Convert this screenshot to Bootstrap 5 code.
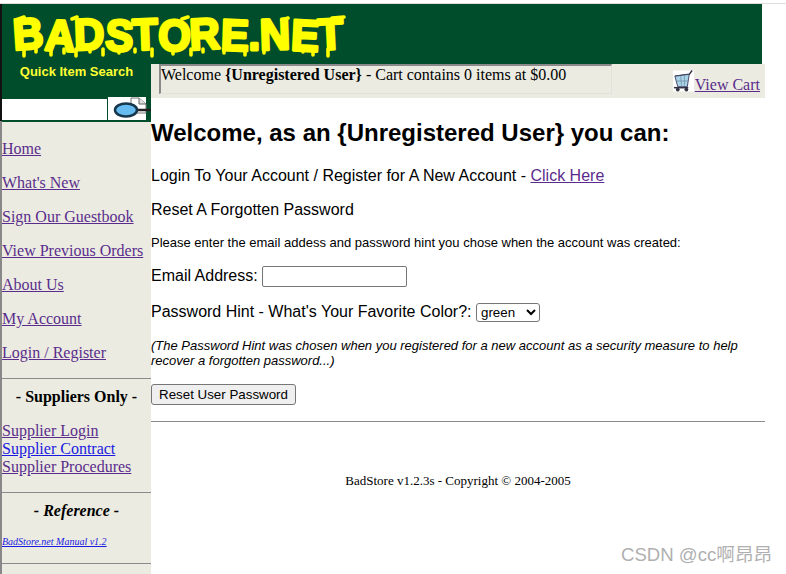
<!DOCTYPE html>
<html lang="en">
<head>
    <meta charset="UTF-8">
    <meta name="viewport" content="width=device-width, initial-scale=1.0">
    <title>BadStore.net - Reset Password</title>
    <link href="https://cdn.jsdelivr.net/npm/bootstrap@5.3.0/dist/css/bootstrap.min.css" rel="stylesheet">
    <style>
        html, body { height: 574px; overflow: hidden; }
        body {
            background: #fff;
            color: #000;
            font-family: "Liberation Serif", serif;
            font-size: 16px;
            line-height: 18px;
        }
        a { color: #5a2d8c; }
        a.fresh { color: #1a1ae0; }
        .top-rule { height: 4px; background: linear-gradient(#fff 3px, #ddd 3px); }
        .shell {
            width: 765px;
            height: 570px;
            border-left: 2px solid #777;
            border-image: linear-gradient(#111 118px, #888 118px) 1;
        }
        .banner { width: 760px; height: 60px; background: #004d2b; }
        .banner svg { display: block; }
        .side-col { width: 149px; flex: none; }
        .search-box { height: 58px; background: #004d2b; }
        .search-title {
            height: 35px;
            color: #ffff33;
            font: bold 13px/15px "Liberation Sans", sans-serif;
            text-align: center;
        }
        .search-input { width: 105px; height: 21px; background: #fff; border: 0; padding: 0; }
        .search-go { width: 38px; height: 23px; background: #fff; border: 0; padding: 0; margin: -2px 0 0 1px; }
        .search-go svg { overflow: visible; }
        .side-menu { background: #ebebe1; height: 452px; }
        .side-menu p { margin: 0 0 16px; }
        .side-menu .first-link { padding-top: 18px; }
        .side-rule { border-top: 1px solid #8a8a8a; height: 0; }
        .side-head { font-size: 16px; font-weight: bold; text-align: center; margin: 8px 0 15px; line-height: 20px; }
        .supply-links { margin-bottom: 16px; }
        .manual-link { font-size: 10px; font-style: italic; line-height: 12px; }
        .side-menu p.manual-link { margin: 0 0 15px; }
        .main-col { width: 614px; flex: none; }
        .cart-bar { height: 34px; background: #ebebe1; }
        .welcome-cell {
            width: 453px;
            height: 30px;
            margin-left: 8px;
            padding-top: 1px;
            border-top: 2px solid #8a8a8a;
            border-left: 2px solid #8a8a8a;
            border-right: 1px solid #e2e2da;
            border-bottom: 1px solid #e2e2da;
            line-height: 16px;
        }
        .cart-cell { padding: 0 5px 4px 0; height: 34px; }
        .cart-cell svg { margin-bottom: 2px; margin-right: 1px; }
        .main-body { font: 16px/18px "Liberation Sans", sans-serif; }
        .main-body h2 { font: bold 24px/28px "Liberation Sans", sans-serif; margin: 21px 0 20px; }
        .main-body p { margin: 0 0 16px; }
        .fine-print { font-size: 13px; line-height: 15px; }
        .email-field { width: 145px; height: 21px; border: 1px solid #767676; border-radius: 2px; background: #fff; padding: 0; vertical-align: middle; }
        .hint-pick {
            width: 64px; height: 19px;
            font: 13.33px "Liberation Sans", sans-serif;
            border: 1px solid #767676; border-radius: 3px; background: #fff;
            vertical-align: middle;
        }
        .reset-btn {
            font: 13.33px/15px "Liberation Sans", sans-serif;
            color: #000;
            background: #efefef;
            border: 1px solid #767676;
            border-radius: 3px;
            padding: 2px 7px;
            width: 145px;
            height: 21px;
            display: block;
        }
        .reset-btn:hover { background: #e5e5e5; color: #000; border-color: #767676; }
        .main-rule { border-top: 1px solid #8a8a8a; margin-top: 16px; height: 0; }
        .copy-line { font: 13px/15px "Liberation Serif", serif; text-align: center; margin-top: 51px; }
        .mark-csdn {
            position: absolute;
            left: 621px;
            top: 545px;
            color: #b0b0b0;
            font: 18.6px/20px "Liberation Sans", "Noto Sans CJK SC", sans-serif;
            white-space: nowrap;
        }
    </style>
</head>
<body>
    <div class="top-rule"></div>
    <div class="shell">
        <div class="banner">
            <svg width="760" height="60" viewBox="0 0 760 60">
                <g fill="#ffff00" stroke="#ffff00">
                    <text x="12" y="46" font-family="Liberation Sans" font-weight="bold" font-size="44" stroke-width="3" stroke-linejoin="round" textLength="330" lengthAdjust="spacingAndGlyphs" rotate="-4 3 -2 3 -2 2 -3 2 0 -2 3 -3">BADSTORE.NET</text>
                    <g stroke-width="3.6" stroke-linecap="round">
                        <path d="M22 44v8M34 45v3M49 45v6M62 45v4M74 45v7M88 45v3M101 45v6M117 45v4M133 45v3M150 45v7M171 45v5M189 45v6M201 45v3M222 45v4M243 45v6M262 45v4M301 45v3M311 45v6M326 45v7"/>
                        <path d="M14 16l8 -3M70 15l5 -2M180 15l6 -2M280 16l6 -2M330 14l12 -1"/>
                    </g>
                </g>
            </svg>
        </div>
        <div class="d-flex">
            <div class="side-col">
                <div class="search-box">
                    <div class="search-title">Quick Item Search</div>
                    <div class="d-flex">
                        <input class="search-input" type="text" aria-label="Quick Item Search">
                        <button class="search-go" type="button" aria-label="Search">
                            <svg width="38" height="23" viewBox="0 0 38 23" class="d-block">
                                <path d="M23 1h8l7 6v9H23z" fill="#fff" stroke="#777"/>
                                <path d="M31 1v6h7" fill="#ddd" stroke="#666"/>
                                <path d="M29 13h14" stroke="#222" stroke-width="2.5"/>
                                <ellipse cx="18" cy="13" rx="11" ry="6.5" fill="#66bbf0" stroke="#16364c" stroke-width="2.5"/>
                            </svg>
                        </button>
                    </div>
                </div>
                <div class="side-menu">
                    <div class="first-link">
                        <p><a href="#">Home</a></p>
                        <p><a href="#">What's New</a></p>
                        <p><a href="#">Sign Our Guestbook</a></p>
                        <p><a href="#">View Previous Orders</a></p>
                        <p><a href="#">About Us</a></p>
                        <p><a href="#">My Account</a></p>
                        <p class="mb-0"><a href="#">Login / Register</a></p>
                    </div>
                    <div class="side-rule mt-3"></div>
                    <div class="side-head">- Suppliers Only -</div>
                    <div class="supply-links">
                        <a href="#">Supplier Login</a><br>
                        <a href="#" class="fresh">Supplier Contract</a><br>
                        <a href="#">Supplier Procedures</a>
                    </div>
                    <div class="side-rule"></div>
                    <div class="side-head fst-italic">- Reference -</div>
                    <p class="manual-link"><a href="#" class="fresh">BadStore.net Manual v1.2</a></p>
                    <div class="side-rule"></div>
                </div>
            </div>
            <div class="main-col">
                <div class="cart-bar d-flex">
                    <div class="welcome-cell">Welcome <b>{Unregistered User}</b> - Cart contains 0 items at $0.00</div>
                    <div class="cart-cell d-flex justify-content-end align-items-end ms-auto">
                        <svg width="21" height="22" viewBox="0 0 22 22">
                            <rect width="22" height="22" fill="#fff"/>
                            <path d="M2 6l15-2 3-4" fill="none" stroke="#334" stroke-width="1.5"/>
                            <path d="M2 6l3 11h10l2-13z" fill="#a9d3e6" stroke="#446" stroke-width="1"/>
                            <path d="M4 11h12M8 6l1 10M12 5v11" stroke="#6a8aa0" stroke-width=".7"/>
                            <path d="M1 18h15" stroke="#334" stroke-width="1.6"/>
                            <circle cx="5" cy="20" r="2" fill="#334"/>
                            <circle cx="14" cy="20" r="2" fill="#334"/>
                        </svg>
                        <a href="#">View Cart</a>
                    </div>
                </div>
                <div class="main-body">
                    <h2>Welcome, as an {Unregistered User} you can:</h2>
                    <p>Login To Your Account / Register for A New Account - <a href="#">Click Here</a></p>
                    <p>Reset A Forgotten Password</p>
                    <p class="fine-print">Please enter the email addess and password hint you chose when the account was created:</p>
                    <form onsubmit="return false">
                        <p>Email Address: <input class="email-field" type="text" aria-label="Email Address"></p>
                        <p>Password Hint - What's Your Favorite Color?:
                            <select class="hint-pick" aria-label="Password Hint">
                                <option>green</option>
                                <option>blue</option>
                                <option>red</option>
                                <option>orange</option>
                                <option>purple</option>
                                <option>yellow</option>
                            </select>
                        </p>
                        <p class="fine-print fst-italic">(The Password Hint was chosen when you registered for a new account as a security measure to help recover a forgotten password...)</p>
                        <button class="btn reset-btn" type="submit">Reset User Password</button>
                    </form>
                    <div class="main-rule"></div>
                    <div class="copy-line">BadStore v1.2.3s - Copyright © 2004-2005</div>
                </div>
            </div>
        </div>
    </div>
    <div class="mark-csdn">CSDN @cc啊昂昂</div>
</body>
</html>
